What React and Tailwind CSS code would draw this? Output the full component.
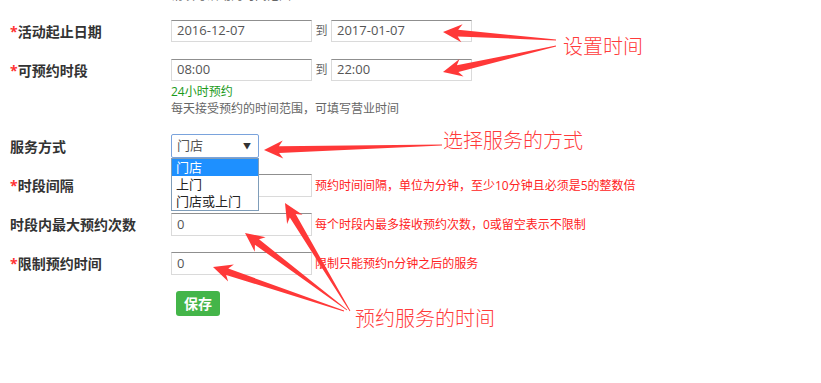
import React from 'react';

const arrows = [
  { from: [556, 40], to: [443, 32] },
  { from: [556, 46], to: [443, 72] },
  { from: [442, 145], to: [264, 150] },
  { from: [350, 311], to: [285, 203] },
  { from: [347, 310], to: [245, 233] },
  { from: [344, 311], to: [213, 267] },
];

function arrowPoints([x1, y1], [x2, y2]) {
  const len = Math.hypot(x2 - x1, y2 - y1);
  const dx = (x2 - x1) / len;
  const dy = (y2 - y1) / len;
  const nx = -dy;
  const ny = dx;
  const hl = 19, hw = 9, w1 = 3.4, w0 = 0.4;
  const bx = x2 - dx * hl;
  const by = y2 - dy * hl;
  const pts = [
    [x1 + nx * w0, y1 + ny * w0],
    [bx + dx * 4 + nx * w1, by + dy * 4 + ny * w1],
    [bx + nx * hw, by + ny * hw],
    [x2, y2],
    [bx - nx * hw, by - ny * hw],
    [bx + dx * 4 - nx * w1, by + dy * 4 - ny * w1],
    [x1 - nx * w0, y1 - ny * w0],
  ];
  return pts.map((p) => p.join(',')).join(' ');
}

function TextInput({ value, className = '' }) {
  return (
    <div
      className={`w-[141px] bg-white border border-[#dadada] border-t-[#8f8f8f] pl-[5px] flex items-center text-[13px] text-[#555] ${className}`}
    >
      {value}
    </div>
  );
}

function Label({ children, required }) {
  return (
    <div className="w-[161px] shrink-0 text-[14px] font-bold text-[#333]">
      {required && <span className="text-[#f33]">*</span>}
      {children}
    </div>
  );
}

export default function App() {
  return (
    <div className="relative w-full h-[383px] overflow-hidden bg-white font-['Open_Sans','Noto_Sans_CJK_SC',sans-serif]">
      <div className="pl-[10px] flex flex-col">
        <div className="ml-[161px] -mt-[12px] h-[16px] text-[12px] leading-[16px] text-[#666]">
          请填写活动的时间范围
        </div>

        <div className="mt-[16px] flex items-center">
          <Label required>活动起止日期</Label>
          <TextInput value="2016-12-07" className="h-[22px]" />
          <span className="w-[19px] text-center text-[12px] text-[#666]">到</span>
          <TextInput value="2017-01-07" className="h-[22px]" />
        </div>

        <div className="mt-[17px] flex items-center">
          <Label required>可预约时段</Label>
          <TextInput value="08:00" className="h-[22px]" />
          <span className="w-[19px] text-center text-[12px] text-[#666]">到</span>
          <TextInput value="22:00" className="h-[22px]" />
        </div>

        <div className="ml-[161px] mt-[3px] text-[12px] leading-[16px] text-[#1a9a1a]">24小时预约</div>
        <div className="ml-[161px] mt-[1px] text-[12px] leading-[16px] text-[#666]">每天接受预约的时间范围，可填写营业时间</div>

        <div className="mt-[17px] flex items-center relative z-10">
          <Label>服务方式</Label>
          <div className="relative">
            <div className="w-[88px] h-[24px] border border-[#7aa3dc] rounded-[2px] bg-white flex items-center justify-between pl-[5px] pr-[7px] text-[13px] text-[#555]">
              <span>门店</span>
              <span className="text-[8px] text-[#333]">▼</span>
            </div>
            <div className="absolute top-full left-0 w-[88px] bg-white border border-[#7f9db9] text-[13px] leading-[17px] text-[#222]">
              <div className="bg-[#1e90ff] text-white pl-[4px]">门店</div>
              <div className="pl-[4px]">上门</div>
              <div className="pl-[4px]">门店或上门</div>
            </div>
          </div>
        </div>

        <div className="mt-[16px] flex items-center">
          <Label required>时段间隔</Label>
          <TextInput value="" className="h-[23px]" />
          <span className="ml-[3px] text-[12px] text-[#f22]">预约时间间隔，单位为分钟，至少10分钟且必须是5的整数倍</span>
        </div>

        <div className="mt-[16px] flex items-center">
          <Label>时段内最大预约次数</Label>
          <TextInput value="0" className="h-[23px]" />
          <span className="ml-[3px] text-[12px] text-[#f22]">每个时段内最多接收预约次数，0或留空表示不限制</span>
        </div>

        <div className="mt-[16px] flex items-center">
          <Label required>限制预约时间</Label>
          <TextInput value="0" className="h-[23px]" />
          <span className="ml-[3px] text-[12px] text-[#f22]">限制只能预约n分钟之后的服务</span>
        </div>

        <div className="mt-[16px] ml-[166px]">
          <button className="w-[44px] h-[25px] rounded-[3px] bg-[#44b549] text-white text-[14px] font-bold">保存</button>
        </div>
      </div>

      <svg className="absolute inset-0 pointer-events-none z-20" width="821" height="383">
        {arrows.map((a, i) => (
          <polygon key={i} points={arrowPoints(a.from, a.to)} fill="#ff3838" />
        ))}
      </svg>

      <div className="absolute left-[563px] top-[35px] text-[20px] leading-[24px] text-[#ff3b3b] font-light">设置时间</div>
      <div className="absolute left-[443px] top-[129px] text-[20px] leading-[24px] text-[#ff3b3b] font-light">选择服务的方式</div>
      <div className="absolute left-[355px] top-[307px] text-[20px] leading-[24px] text-[#ff3b3b] font-light">预约服务的时间</div>
    </div>
  );
}
